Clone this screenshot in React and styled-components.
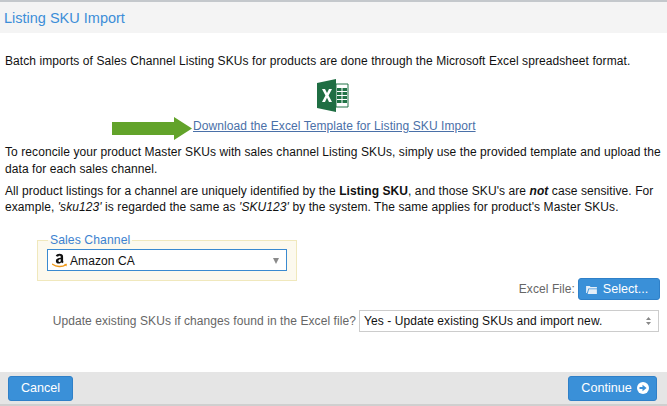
import React from "react";
import styled, { createGlobalStyle } from "styled-components";

const GlobalStyle = createGlobalStyle`
    html, body {
        margin: 0;
        padding: 0;
        background: #fff;
    }
    body {
        font-family: "Liberation Sans", Arial, sans-serif;
        font-size: 12px;
        letter-spacing: 0.08px;
        color: #111;
    }
`;

const Page = styled.div`
    width: 667px;
    height: 406px;
    display: flex;
    flex-direction: column;
    overflow: hidden;
    background: #fff;
`;

const Header = styled.header`
    height: 31px;
    flex: none;
    display: flex;
    align-items: center;
    padding-left: 4px;
    background: #f4f4f4;
    border-top: 2px solid #c4c8cc;
    font-size: 14.5px;
    letter-spacing: 0;
    color: #3c8ed8;
`;

const Body = styled.main`
    flex: 1;
    padding: 20px 0 0 5px;
    display: flex;
    flex-direction: column;
`;

const Paragraph = styled.p`
    margin: 0 0 ${props => props.$gap || 0}px;
    line-height: ${props => props.$line || 16}px;
    white-space: nowrap;
`;

const ExcelRow = styled.div`
    display: flex;
    justify-content: center;
    margin-top: 10px;
    padding-right: 6px;
`;

const LinkRow = styled.div`
    display: flex;
    align-items: center;
    padding-left: 107px;
    height: 24px;
    margin: 4px 0 4px;
`;

const DownloadLink = styled.a`
    margin: 0 0 4px 1px;
    color: #4a70a8;
    text-decoration: underline;
`;

const Channel = styled.fieldset`
    width: 260px;
    height: 47px;
    box-sizing: border-box;
    margin: 19px 0 0 32px;
    padding: 0 9px;
    background: #fcf9ee;
    border: 1px solid #f0e8bc;
    min-inline-size: 0;
`;

const ChannelLegend = styled.legend`
    margin-left: 1px;
    padding: 0 2px;
    font-size: 12.2px;
    line-height: 12px;
    color: #3c82d0;
`;

const ChannelSelect = styled.div`
    height: 22px;
    box-sizing: border-box;
    display: flex;
    align-items: center;
    gap: 2px;
    padding: 1px 5px 0 4px;
    margin-top: 3px;
    background: #fff;
    border: 1px solid #3a8ad0;
`;

const Caret = styled.span`
    margin-left: auto;
    margin-right: 2px;
    width: 0;
    height: 0;
    border-left: 3.5px solid transparent;
    border-right: 3.5px solid transparent;
    border-top: 6px solid #8a8a8a;
`;

const FormRow = styled.div`
    display: flex;
    align-items: center;
    justify-content: flex-end;
    gap: 3px;
    padding-right: ${props => props.$right}px;
    margin-top: ${props => props.$top}px;
`;

const FormLabel = styled.label`
    color: #666;
`;

const UpdateSelect = styled.div`
    width: 300px;
    height: 22px;
    box-sizing: border-box;
    display: flex;
    align-items: center;
    justify-content: space-between;
    padding: 0 7px 0 4px;
    background: #fff;
    border: 1px solid #ccc;
`;

const Button = styled.button`
    height: ${props => props.$height || 25}px;
    width: ${props => props.$width}px;
    box-sizing: border-box;
    display: inline-flex;
    align-items: center;
    justify-content: center;
    gap: ${props => props.$gap || 0}px;
    padding: 0 ${props => props.$padRight || 0}px 0 ${props => props.$padLeft || 0}px;
    font-family: inherit;
    font-size: 12.6px;
    font-weight: 400;
    color: #fff;
    background: #3a90d8;
    border: 1px solid #2f80c8;
    border-radius: 3px;
`;

const Footer = styled.footer`
    height: 32px;
    flex: none;
    display: flex;
    align-items: center;
    justify-content: space-between;
    padding: 0 10px 0 8px;
    background: #e5e5e5;
    border-bottom: 2px solid #cfcfcf;
`;

const ExcelIcon = () => (
    <svg width="32" height="33" viewBox="0 0 32 33">
        <path d="M19 5h12v23H19z" fill="#fff" stroke="#217346" strokeWidth="1" />
        <path d="M20 9h4.500v3H20zM25.500 9H30v3h-4.500zM20 13h4.500v3H20zM25.500 13H30v3h-4.500zM20 17h4.500v3H20zM25.500 17H30v3h-4.500zM20 21h4.500v3H20zM25.500 21H30v3h-4.500z" fill="#217346" />
        <path d="M0 4 19 0v33L0 29z" fill="#1f6e43" />
        <path d="M5 10h3l2 4 2-4h3l-3.400 6.500L15 23h-3l-2-4.200L8 23H5l3.400-6.500z" fill="#fff" />
    </svg>
);

const GreenArrow = () => (
    <svg width="80" height="23" viewBox="0 0 80 23">
        <path d="M0 5h62V0l18 11.500L62 23v-5H0z" fill="#62a32a" />
    </svg>
);

const AmazonIcon = () => (
    <svg width="16" height="16" viewBox="0 0 15 15">
        <path d="M3.500 2.800C4 1.200 5.500.6 7 .6c2 0 3.400.9 3.400 2.800v3.900c0 .5.200.8.500 1.100L9.600 9.600c-.4-.3-.7-.7-.9-1-.6.800-1.400 1.200-2.500 1.200-1.500 0-2.600-.9-2.600-2.400 0-2 1.800-2.800 4.600-3v-.7c0-.7-.4-1.200-1.200-1.200-.7 0-1.200.4-1.300 1zM8.200 5.800c-1.300 0-2.200.5-2.200 1.500 0 .7.400 1.100 1 1.100.9 0 1.200-.9 1.200-1.700z" fill="#111" />
        <path d="M.5 10.500c3.500 2.600 9 2.900 12.300.6" fill="none" stroke="#f09a1a" strokeWidth="1.300" strokeLinecap="round" />
        <path d="M11.300 10.400l2.700-.3-.5 2.600z" fill="#f09a1a" />
    </svg>
);

const FolderIcon = () => (
    <svg width="11" height="9" viewBox="0 0 12 10">
        <path d="M0 1h4l1 1.300h7V4H2.500L1 9H0z" fill="#e4eef8" />
        <path d="M3.200 4.800H12V10H1.700z" fill="#e4eef8" />
    </svg>
);

const SortIcon = () => (
    <svg width="5" height="8" viewBox="0 0 7 11">
        <path d="M3.500 0 7 4H0zM0 7h7l-3.500 4z" fill="#888" />
    </svg>
);

const ArrowCircleIcon = () => (
    <svg width="12" height="12" viewBox="0 0 12 12">
        <circle cx="6" cy="6" r="6" fill="#fff" />
        <path d="M2.500 5h3V2.800L9.600 6 5.500 9.200V7h-3z" fill="#3a90d8" />
    </svg>
);

const App = () => (
    <Page>
        <GlobalStyle />
        <Header>Listing SKU Import</Header>
        <Body>
            <Paragraph>Batch imports of Sales Channel Listing SKUs for products are done through the Microsoft Excel spreadsheet format.</Paragraph>
            <ExcelRow><ExcelIcon /></ExcelRow>
            <LinkRow>
                <GreenArrow />
                <DownloadLink href="#">Download the Excel Template for Listing SKU Import</DownloadLink>
            </LinkRow>
            <Paragraph $line={17} $gap={5}>
                To reconcile your product Master SKUs with sales channel Listing SKUs, simply use the provided template and upload the<br />
                data for each sales channel.
            </Paragraph>
            <Paragraph>
                All product listings for a channel are uniquely identified by the <b>Listing SKU</b>, and those SKU's are <b><i>not</i></b> case sensitive. For<br />
                example, <i>'sku123'</i> is regarded the same as <i>'SKU123'</i> by the system. The same applies for product's Master SKUs.
            </Paragraph>
            <Channel>
                <ChannelLegend>Sales Channel</ChannelLegend>
                <ChannelSelect>
                    <AmazonIcon />
                    Amazon CA
                    <Caret />
                </ChannelSelect>
            </Channel>
            <FormRow $right={7} $top={-3}>
                <FormLabel>Excel File:</FormLabel>
                <Button $width={82} $height={22} $gap={6} $padRight={4}><FolderIcon />Select...</Button>
            </FormRow>
            <FormRow $right={8} $top={10}>
                <FormLabel>Update existing SKUs if changes found in the Excel file?</FormLabel>
                <UpdateSelect>
                    Yes - Update existing SKUs and import new.
                    <SortIcon />
                </UpdateSelect>
            </FormRow>
        </Body>
        <Footer>
            <Button $width={65}>Cancel</Button>
            <Button $width={89} $gap={5} $padLeft={5}>Continue<ArrowCircleIcon /></Button>
        </Footer>
    </Page>
);

export default App;
